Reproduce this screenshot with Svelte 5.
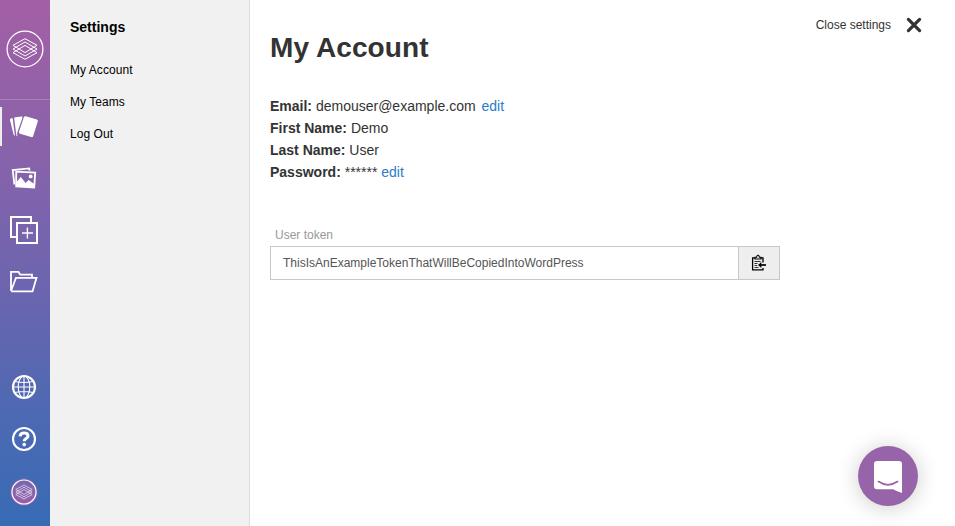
<script>
  const links = ['My Account', 'My Teams', 'Log Out'];
  const token = 'ThisIsAnExampleTokenThatWillBeCopiedIntoWordPress';
</script>

{#snippet layers()}
  <path d="M-12 -3.7 0 -10.3 12 -3.7 0 3.6Z" />
  <path d="M-12 3.7 0 -3.6 12 3.7 0 10.3Z" />
  <path d="M-12 0 0 -7 12 0 0 7Z" />
{/snippet}

<div class="app">
  <nav class="rail">
    <div class="brand">
      <svg width="50" height="99" viewBox="0 0 50 99">
        <circle cx="25" cy="49" r="17.9" stroke-width="1.3" />
        <g transform="translate(25 49)" stroke-width="1">{@render layers()}</g>
      </svg>
    </div>
    <div class="item active">
      <svg viewBox="0 0 50 52">
        <g fill="#fff" stroke="none">
          <path d="M10.9 17.5 12.6 17 14.9 34.6Q14 34.6 13.6 33.4L10 19.2Q9.8 17.9 10.9 17.5Z" />
          <path d="M15.2 16.2 21.3 15.4Q23 15.3 22.5 16.8L17.3 31.4Q16.7 33.6 17.8 35.2 16.5 35.3 16.3 34L14.2 17.6Q14.1 16.4 15.2 16.2Z" />
          <path d="M25.8 15.3 36.8 18.4Q38.2 18.9 37.8 20.4L33.2 35Q32.7 36.5 31.2 36.1L20 32.8Q18.5 32.3 19 30.8L23.8 16.5Q24.3 14.9 25.8 15.3Z" />
        </g>
      </svg>
    </div>
    <div class="item">
      <svg viewBox="0 0 50 52">
        <path d="M14.4 31.5 12.7 17.1 29.2 15.4 29.5 17.5" stroke-width="1.8" />
        <path d="m16.2 18.7 19 1-1 14.8-18-1Z" stroke-width="1.8" />
        <path d="m15.8 30 5-5.9 4.8 5.8 3.1-3 5.8 4.4-.3 3.2-18-1Z" fill="#fff" stroke="none" />
        <circle cx="30.7" cy="23.4" r="1.9" fill="#fff" stroke="none" />
      </svg>
    </div>
    <div class="item">
      <svg viewBox="0 0 50 52" stroke-width="2">
        <path d="M16 32H11V12H31V18M17 18H37V38H17Z" />
        <path d="M27.4 22.5v11M22 28h11" stroke-width="1.4" />
      </svg>
    </div>
    <div class="item">
      <svg viewBox="0 0 50 52" stroke-width="1.8">
        <path d="M11 34V14.9h7.5l1.8 2.8H32V20.5M11 34 16 20.8H36.5L32.5 34.4H11.2" />
      </svg>
    </div>
    <div class="item lower">
      <svg viewBox="0 0 50 52">
        <circle cx="24" cy="26" r="11" stroke-width="2.1" />
        <path d="M24 15v22M13 26h22M15 20.5Q24 22.6 33 20.5M15 31.5Q24 29.4 33 31.5" stroke-width="1.1" />
        <ellipse cx="24" cy="26" rx="5.8" ry="11" stroke-width="1.1" />
      </svg>
    </div>
    <div class="item">
      <svg viewBox="0 0 50 52">
        <circle cx="24" cy="26" r="11" stroke-width="2.1" />
        <path d="M20.1 23.4c.1-2.3 1.7-3.3 3.9-3.3 2.4 0 4 1.1 4 2.9 0 2.7-3.8 2.3-3.8 5.2" stroke-width="3" />
        <circle cx="24.2" cy="31.6" r="1.8" fill="#fff" stroke="none" />
      </svg>
    </div>
    <div class="item">
      <svg viewBox="0 0 50 52">
        <defs>
          <linearGradient id="avatar" x1="0" y1="0" x2="0" y2="1">
            <stop offset="0" stop-color="#7668ae" />
            <stop offset="1" stop-color="#9b5eaa" />
          </linearGradient>
        </defs>
        <circle cx="24" cy="27" r="13.6" fill="url(#avatar)" stroke="none" />
        <circle cx="24" cy="27" r="12" stroke-width="1.2" />
        <g transform="translate(24 27) scale(.68)" stroke-width=".9">{@render layers()}</g>
      </svg>
    </div>
  </nav>

  <aside>
    <h2>Settings</h2>
    {#each links as link}
      <a href="#settings">{link}</a>
    {/each}
  </aside>

  <main>
    <header>
      <h1>My Account</h1>
      <button class="close">
        <span>Close settings</span>
        <svg width="16" height="16" viewBox="0 0 16 16"><path d="m2.4 2.4 11.2 11.2m0-11.2L2.4 13.6" stroke="#333" stroke-width="3.2" stroke-linecap="round" /></svg>
      </button>
    </header>
    <div class="details">
      <div><b>Email:</b> demouser@example.com <a class="wide" href="#email">edit</a></div>
      <div><b>First Name:</b> Demo</div>
      <div><b>Last Name:</b> User</div>
      <div><b>Password:</b> ****** <a href="#password">edit</a></div>
    </div>
    <div class="label">User token</div>
    <div class="field">
      <div class="value">{token}</div>
      <button class="copy" aria-label="Copy token">
        <svg width="16" height="18" viewBox="0 0 16 18" fill="none" stroke="#000">
          <path d="M12 8.5V3.8H1.6v12H12V14" stroke-width="1.3" />
          <path d="M4 5V3.3h1.6Q5.6 1.2 7 1.2t1.4 2.1H10V5Z" fill="#eee" stroke-width="1.1" />
          <path d="M3.5 7.5h6M3.5 9.5h3M3.5 11.5h2.7M3.5 13.5h4" stroke-width=".8" />
          <path d="M15 11H9" stroke-width="1.7" />
          <path d="M10.3 8.1v5.8L7 11Z" fill="#000" stroke="none" />
        </svg>
      </button>
    </div>
  </main>

  <button class="chat" aria-label="Open chat">
    <svg width="28" height="32" viewBox="0 0 28 32">
      <path d="M3 0h22Q28 0 28 3V32q-4.5-1.2-8.8-3.8H3Q0 28.2 0 25.2V3Q0 0 3 0Z" fill="#fff" />
      <path d="M4.5 20.6q9.5 6.4 19 0" stroke="#9763a9" stroke-width="1.8" stroke-linecap="round" />
    </svg>
  </button>
</div>

<style>
  .app {
    display: flex;
    width: 955px;
    height: 526px;
    overflow: hidden;
    background: #fff;
    color: #333;
    font: 14px/22px "Liberation Sans", Arial, sans-serif;
  }
  h1, h2 { margin: 0; }
  svg { display: block; fill: none; }
  button { padding: 0; border: 0; background: none; color: inherit; font: inherit; }
  a { text-decoration: none; }
  .rail {
    display: flex;
    flex-direction: column;
    width: 50px;
    background: linear-gradient(#a45fa5, #8463ab 33%, #6a65af 56%, #4c69b3 80%, #386bb5);
  }
  .rail svg { stroke: #fff; }
  .brand { box-sizing: border-box; height: 100px; margin-bottom: 1px; border-bottom: 1px solid #ab7bbb; }
  .item { box-sizing: border-box; height: 52px; }
  .item svg { width: 50px; height: 52px; }
  .active { background: linear-gradient(#eee, #eee) 0 6px / 2px 39px no-repeat; }
  .lower { margin-top: 52px; }
  aside {
    box-sizing: border-box;
    width: 200px;
    padding: 16px 20px;
    border-right: 1px solid #dcdcdc;
    background: #f1f1f1;
    color: #000;
  }
  h2 { margin-bottom: 16px; font-size: 14px; line-height: 22px; }
  aside a { display: block; color: #000; font-size: 12px; line-height: 32px; letter-spacing: .05px; }
  main { flex: 1; padding: 0 33px 0 20px; }
  header { display: flex; justify-content: space-between; height: 95px; }
  h1 { padding-top: 32px; font-size: 28px; line-height: 32px; letter-spacing: .1px; }
  .close { display: flex; align-items: center; gap: 15px; height: 50px; font-size: 12px; }
  .details a { color: #2b7bc6; }
  .details .wide { margin-left: 2px; }
  .label { margin: 41px 0 0 5px; color: #999; font-size: 12px; line-height: 22px; }
  .field {
    display: flex;
    box-sizing: border-box;
    width: 510px;
    height: 34px;
    border: 1px solid #c8c8c8;
  }
  .value { flex: 1; padding-left: 12px; color: #555; font-size: 12px; line-height: 32px; }
  .copy {
    display: flex;
    align-items: center;
    justify-content: center;
    width: 41px;
    border-left: 1px solid #c8c8c8;
    background: #eee;
  }
  .chat {
    position: absolute;
    left: 858px;
    top: 446px;
    display: flex;
    align-items: center;
    justify-content: center;
    box-sizing: border-box;
    width: 60px;
    height: 60px;
    padding-top: 2px;
    border-radius: 50%;
    background: #9763a9;
    box-shadow: 0 2px 22px rgba(0, 0, 0, .2);
  }
</style>
